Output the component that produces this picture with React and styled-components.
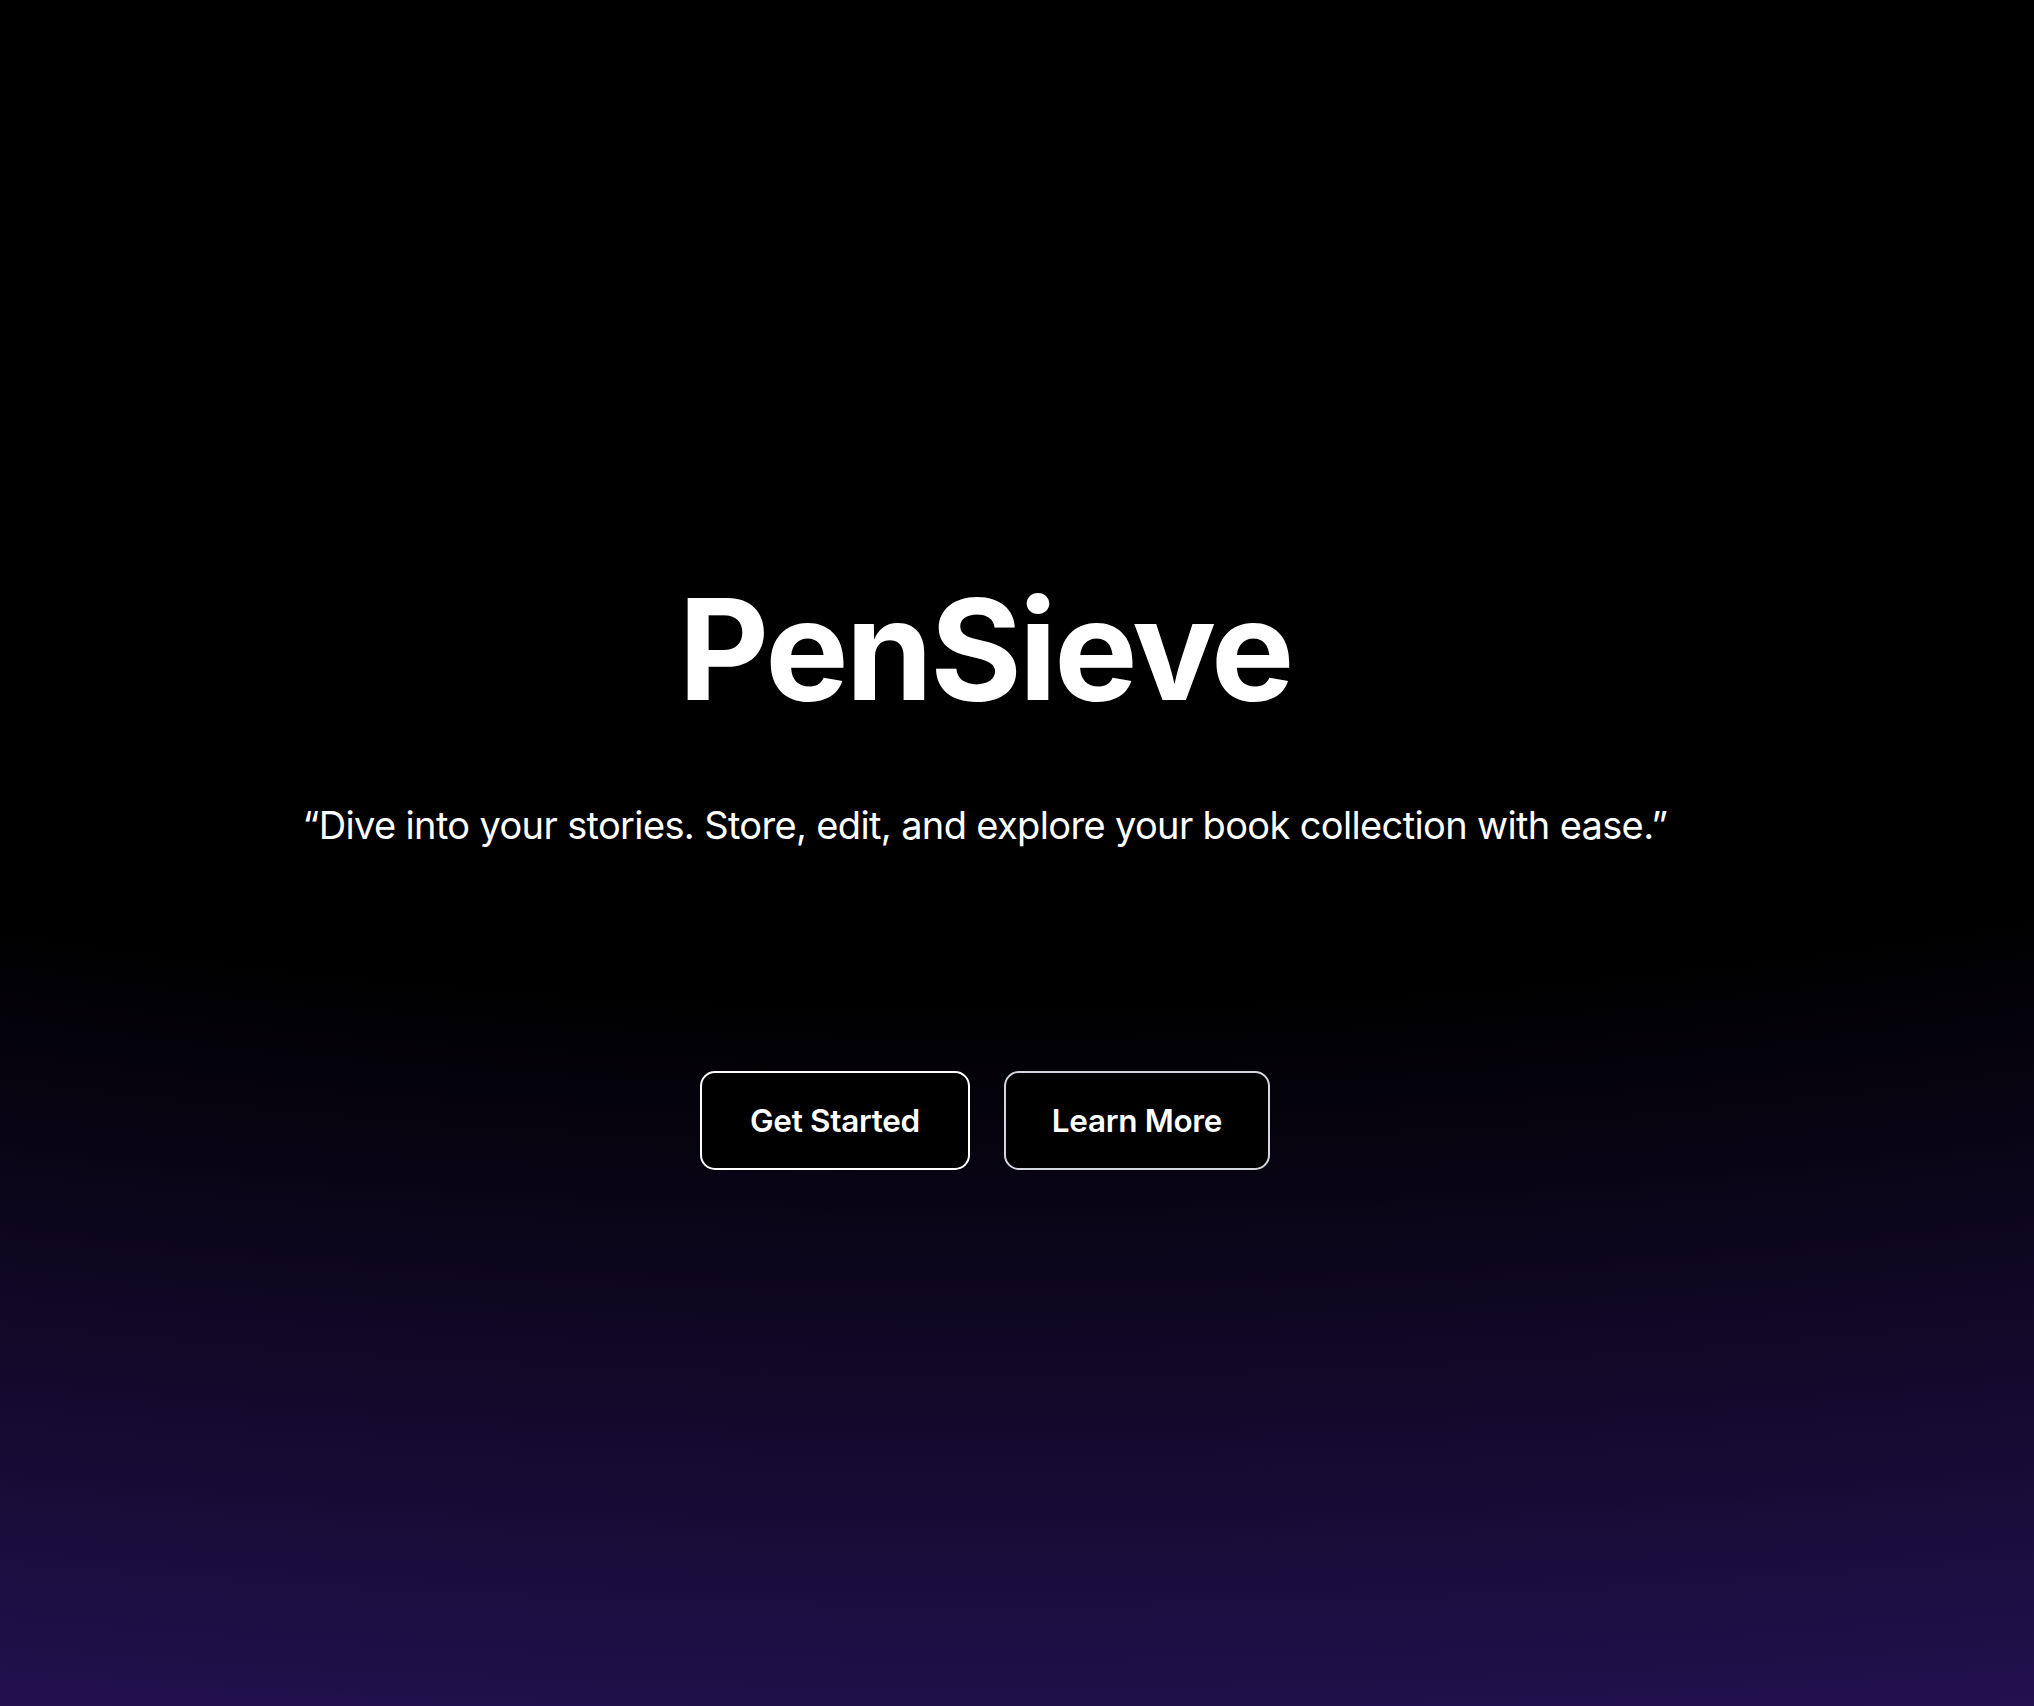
import React from "react";
import styled, { createGlobalStyle } from "styled-components";

const Global = createGlobalStyle`
  html, body { margin: 0; padding: 0; background: #000; }
  * { box-sizing: border-box; }
`;

const Page = styled.main`
  min-height: 100vh;
  display: flex;
  flex-direction: column;
  align-items: center;
  padding: 579px 64px 0 0;
  background: radial-gradient(8700px 3100px at calc(50% - 32px) 170px, #000 26.8%, #6633ee 100%);
  color: #fff;
  font-family: Inter, "Noto Sans", sans-serif;
`;

const Title = styled.h1`
  margin: 0;
  font-size: 140px;
  line-height: 1;
  font-weight: 700;
  letter-spacing: -0.02em;
`;

const Tagline = styled.p`
  margin: 84px 0 0;
  font-size: 38px;
  line-height: 1.2;
  font-weight: 400;
  letter-spacing: -0.017em;
`;

const Actions = styled.div`
  display: flex;
  gap: 34px;
  margin-top: 222px;
`;

const Button = styled.button`
  height: 99px;
  width: ${(p) => p.$w}px;
  display: flex;
  align-items: center;
  justify-content: center;
  background: #000;
  color: #fff;
  border: 2px solid ${(p) => p.$border};
  border-radius: 15px;
  font-family: Inter, "Noto Sans", sans-serif;
  font-size: 31.5px;
  font-weight: 600;
  letter-spacing: -0.01em;
  cursor: pointer;
`;

export default function App() {
  return (
    <>
      <Global />
      <Page>
        <Title>PenSieve</Title>
        <Tagline>“Dive into your stories. Store, edit, and explore your book collection with ease.”</Tagline>
        <Actions>
          <Button $w={270} $border="#ffffff">Get Started</Button>
          <Button $w={266} $border="#d4d6de">Learn More</Button>
        </Actions>
      </Page>
    </>
  );
}
